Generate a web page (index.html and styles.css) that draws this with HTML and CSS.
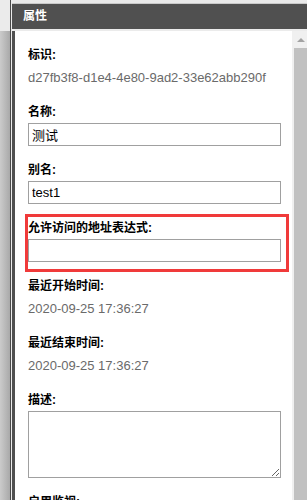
FILE: index.html
```html
<!DOCTYPE html>
<html lang="zh-CN">
  <head>
    <meta charset="utf-8" />
    <meta name="viewport" content="width=device-width, initial-scale=1" />
    <title>属性</title>
    <link rel="stylesheet" href="styles.css">
  </head>
  <body>
    <div class="app">
      <!-- left splitter strip -->
      <div class="side"></div>

      <div class="panel">
        <div class="panel-top"></div>
        <div class="panel-header">属性</div>

        <div class="panel-body">
          <div class="props">
            <div class="field">
              <div class="field-label">标识:</div>
              <div class="field-value">d27fb3f8-d1e4-4e80-9ad2-33e62abb290f</div>
            </div>

            <div class="field">
              <label class="field-label" for="prop-name">名称:</label>
              <input id="prop-name" class="field-input" type="text" value="测试" />
            </div>

            <div class="field">
              <label class="field-label" for="prop-alias">别名:</label>
              <input id="prop-alias" class="field-input" type="text" value="test1" />
            </div>

            <div class="field highlighted">
              <label class="field-label" for="prop-address">允许访问的地址表达式:</label>
              <input id="prop-address" class="field-input" type="text" value="" />
            </div>

            <div class="field">
              <div class="field-label">最近开始时间:</div>
              <div class="field-value">2020-09-25 17:36:27</div>
            </div>

            <div class="field">
              <div class="field-label">最近结束时间:</div>
              <div class="field-value">2020-09-25 17:36:27</div>
            </div>

            <div class="field">
              <label class="field-label" for="prop-desc">描述:</label>
              <textarea id="prop-desc" class="field-input field-textarea"></textarea>
            </div>

            <div class="field">
              <div class="field-label">启用监视:</div>
            </div>
          </div>

          <!-- fake scrollbar -->
          <div class="scrollbar">
            <div class="scroll-arrow"></div>
            <div class="scroll-thumb"></div>
          </div>
        </div>
      </div>
    </div>
  </body>
</html>
```

FILE: styles.css
```css
/* page reset */
html,
body {
  margin: 0;
  height: 100%;
  overflow: hidden;
}

body {
  font-family: "Liberation Sans", "Noto Sans CJK SC", sans-serif;
  background: #ebebeb;
}

.app {
  display: flex;
  height: 500px;
}

/* splitter on the left */
.side {
  width: 10px;
  border-right: 1px solid #4a4a4a;
  margin-right: 1px;
  background:
    linear-gradient(#ebebeb, #ebebeb) top / 100% 31px no-repeat,
    linear-gradient(to right, #cbcbcb, #a9a9a9);
}

.panel {
  flex: 1;
  display: flex;
  flex-direction: column;
  min-width: 0;
}

.panel-top {
  height: 3px;
  border-bottom: 1px solid #c9c9c9;
  background: #e9e9e9;
}

/* dark title bar */
.panel-header {
  height: 25px;
  line-height: 25px;
  padding-left: 11px;
  background: #505050;
  color: #fff;
  font-size: 12px;
  font-weight: bold;
}

.panel-body {
  flex: 1;
  display: flex;
  margin-top: 2px;
  border-left: 3px solid #505050;
  background: #fff;
  min-height: 0;
}

.props {
  flex: 1;
  padding: 16px 11px 0 13px;
}

.field {
  margin-bottom: 17px;
}

.field-label {
  display: block;
  height: 16px;
  line-height: 16px;
  margin-bottom: 3px;
  font-size: 12px;
  font-weight: bold;
  color: #000;
}

.field-value {
  margin-top: 6px;
  line-height: 18px;
  font-size: 13px;
  color: #6a6a6a;
  white-space: nowrap;
}

.field:has(.field-input) {
  margin-bottom: 16px;
}

.field-input {
  display: block;
  box-sizing: border-box;
  width: 100%;
  height: 23px;
  margin: 0;
  padding: 0 3px;
  border: 1px solid #a0a0a0;
  border-radius: 0;
  font-family: "Liberation Sans", "Noto Sans CJK SC", sans-serif;
  font-size: 13px;
  color: #000;
  background: #fff;
  outline: none;
}

.field-textarea {
  height: 67px;
  resize: both;
}

/* red annotation frame round the address field */
.highlighted {
  position: relative;
}

.highlighted::after {
  content: "";
  position: absolute;
  top: -6px;
  left: -3px;
  right: -8px;
  bottom: -10px;
  border: 3px solid #f03a3a;
  pointer-events: none;
}

/* scrollbar look-alike */
.scrollbar {
  width: 15px;
  background: #f0f0f0;
  display: flex;
  flex-direction: column;
}

.scroll-arrow {
  height: 17px;
  position: relative;
}

.scroll-arrow::before {
  content: "";
  position: absolute;
  left: 5px;
  top: 7px;
  border-left: 4px solid transparent;
  border-right: 4px solid transparent;
  border-bottom: 4px solid #a3a3a3;
}

.scroll-thumb {
  flex: 1;
  margin-left: 2px;
  background: #c1c1c1;
}
```
